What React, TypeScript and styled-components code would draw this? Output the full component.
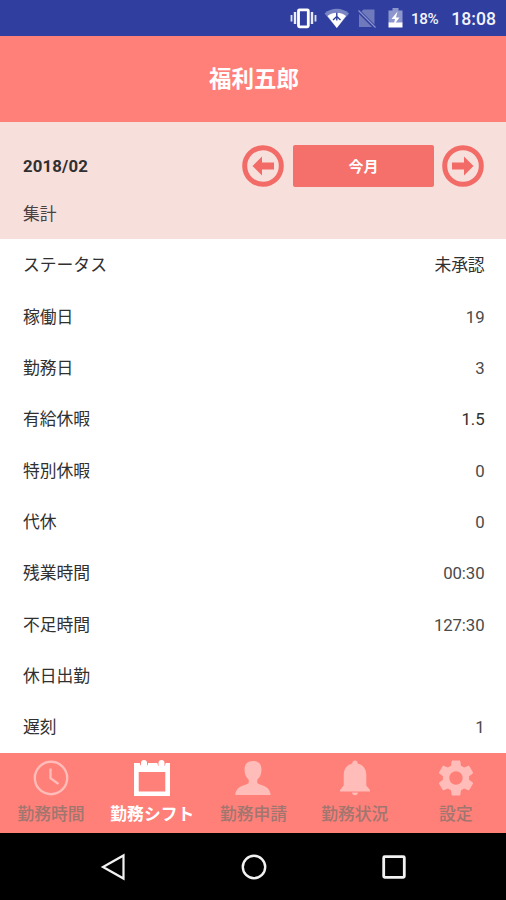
import React from "react";
import styled, { createGlobalStyle } from "styled-components";

const GlobalStyle = createGlobalStyle`
  * { box-sizing: border-box; }
  body { margin: 0; background: #fff; }
`;

const Screen = styled.div`
  width: 506px;
  height: 900px;
  display: flex;
  flex-direction: column;
  overflow: hidden;
  font-family: Roboto, "Noto Sans CJK JP", sans-serif;
  color: #303030;
  background: #fff;
`;

const StatusBar = styled.header`
  flex: 0 0 36px;
  display: flex;
  align-items: center;
  justify-content: flex-end;
  padding-right: 10px;
  background: #303f9f;
  color: #f3f4fb;
`;

const StatusIcons = styled.svg`
  width: 116px;
  height: 36px;
  display: block;
`;

const Battery = styled.span`
  width: 47px;
  padding: 2px 0 0 7px;
  font-size: 15.2px;
  font-weight: 500;
  letter-spacing: -0.4px;
`;

const Clock = styled.span`
  width: 45px;
  padding-top: 2px;
  font-size: 17.6px;
  font-weight: 500;
  text-align: right;
  white-space: nowrap;
`;

const TitleBar = styled.h1`
  flex: 0 0 86px;
  margin: 0;
  display: flex;
  align-items: center;
  justify-content: center;
  background: #ff7f79;
  color: #fff;
  font-size: 22.5px;
  font-weight: 700;
  line-height: 1;
  padding: 0 0 0 2px;
`;

const Summary = styled.section`
  flex: 0 0 117px;
  padding: 22px 22px 0 23px;
  background: #f7dfdc;
`;

const MonthRow = styled.div`
  display: flex;
  align-items: center;
  height: 44px;
`;

const Month = styled.span`
  flex: 1;
  font-size: 16.8px;
  font-weight: 700;
  letter-spacing: 0.15px;
`;

const RoundButton = styled.button`
  width: 42px;
  height: 42px;
  padding: 0;
  border: 0;
  background: none;
  svg { display: block; }
`;

const MonthButton = styled.button`
  width: 141px;
  height: 42px;
  margin: 0 8px 0 9px;
  padding: 2px 0 0;
  border: 0;
  border-radius: 2px;
  background: #f56f6b;
  color: #fff;
  font: 700 15px/1 Roboto, "Noto Sans CJK JP", sans-serif;
`;

const SummaryLabel = styled.div`
  margin-top: 14px;
  font-size: 16.8px;
  line-height: 24px;
  color: #4a4242;
`;

const List = styled.main`
  flex: 1;
  min-height: 0;
  display: grid;
  grid-auto-rows: 51.35px;
  overflow: hidden;
`;

const Row = styled.div`
  display: flex;
  align-items: center;
  justify-content: space-between;
  padding: 1px 21.5px 0 23px;
  font-size: 16.8px;
  line-height: 24px;
`;

const Value = styled.span<{ $strong?: boolean }>`
  color: ${(p) => (p.$strong ? "#303030" : "#4a4a4a")};
  letter-spacing: -0.1px;
`;

const TabBar = styled.nav`
  flex: 0 0 80px;
  display: grid;
  grid-template-columns: repeat(5, 1fr);
  background: #ff7f79;
`;

const Tab = styled.div<{ $active?: boolean }>`
  display: flex;
  flex-direction: column;
  align-items: center;
  padding: 6px 0 0 1px;
  color: ${(p) => (p.$active ? "#fff" : "#ffbcb8")};
  svg { display: block; }
`;

const TabLabel = styled.span<{ $active?: boolean }>`
  margin-top: 5px;
  font-size: 16.8px;
  line-height: 24px;
  font-weight: ${(p) => (p.$active ? 700 : 500)};
  color: ${(p) => (p.$active ? "#fff" : "#a1766f")};
  white-space: nowrap;
`;

const SystemNav = styled.footer`
  flex: 0 0 67px;
  display: flex;
  align-items: center;
  justify-content: space-between;
  padding: 0 98px 0 99px;
  background: #000;
  svg { display: block; }
`;

const rows: { label: string; value: string; strong?: boolean }[] = [
  { label: "ステータス", value: "未承認", strong: true },
  { label: "稼働日", value: "19" },
  { label: "勤務日", value: "3" },
  { label: "有給休暇", value: "1.5", strong: true },
  { label: "特別休暇", value: "0" },
  { label: "代休", value: "0" },
  { label: "残業時間", value: "00:30" },
  { label: "不足時間", value: "127:30" },
  { label: "休日出勤", value: "" },
  { label: "遅刻", value: "1" },
];

const ArrowIcon = ({ flip }: { flip?: boolean }) => (
  <svg width="42" height="42" viewBox="0 0 42 42">
    <circle cx="21" cy="21" r="18.3" fill="none" stroke="#f26b67" strokeWidth="5" />
    <path
      transform={flip ? "translate(42 0) scale(-1 1)" : undefined}
      d="M10.5 21 20 11.5V17.500H32V24.500H20V30.500Z"
      fill="#f26b67"
    />
  </svg>
);

const ClockIcon = () => (
  <svg width="38" height="38" viewBox="0 0 38 38" fill="none" stroke="currentColor" strokeWidth="2.4">
    <circle cx="19" cy="19" r="16.2" />
    <path d="M18.5 9.5V19.2L26.5 25" />
  </svg>
);

const CalendarIcon = () => (
  <svg width="38" height="38" viewBox="0 0 38 38">
    <path
      fill="currentColor"
      fillRule="evenodd"
      d="M1 4H6.800C7.200 6.500 8.500 8 11 8S14.800 6.500 15.200 4H24.300C24.700 6.500 26 8 28.500 8S32.300 6.500 32.700 4H37V37H1ZM5.700 13V32.500H32.300V13Z"
    />
    <rect x="8" y="1" width="6" height="8" rx="3" fill="currentColor" />
    <rect x="25.500" y="1" width="6" height="8" rx="3" fill="currentColor" />
  </svg>
);

const PersonIcon = () => (
  <svg width="38" height="38" viewBox="0 0 38 38" fill="currentColor">
    <path d="M19 2C13.500 2 10.500 5 10.500 10.500C10.500 15 12 18.500 14.700 20.700V24C12.500 26.500 2 26 1.300 36H36.700C36 26 25.500 26.500 23.300 24V20.700C26 18.500 27.500 15 27.500 10.500C27.500 5 24.500 2 19 2Z" />
  </svg>
);

const BellIcon = () => (
  <svg width="38" height="38" viewBox="0 0 38 38" fill="currentColor">
    <path d="M19 1.500C17.300 1.500 16.300 2.700 16.300 4.600C10.500 6 7.700 10.500 7.700 16V26.500L4 31V32.500H34V31L30.300 26.500V16C30.300 10.500 27.500 6 21.700 4.600C21.700 2.700 20.700 1.500 19 1.500Z" />
    <path d="M16 33.500H22C22 37 16 37 16 33.500Z" />
  </svg>
);

const GearIcon = () => (
  <svg width="42" height="42" viewBox="0 0 24 24" fill="currentColor">
    <path d="M19.430 12.980c.040-.320.070-.640.070-.980s-.030-.660-.070-.980l2.110-1.650c.190-.150.240-.420.120-.640l-2-3.460c-.120-.220-.390-.300-.610-.220l-2.490 1c-.520-.400-1.080-.730-1.690-.980l-.380-2.650C14.460 2.180 14.250 2 14 2h-4c-.250 0-.460.180-.490.420l-.380 2.650c-.610.250-1.170.590-1.690.980l-2.490-1c-.230-.090-.490 0-.610.220l-2 3.460c-.130.220-.070.490.120.640l2.110 1.650c-.040.320-.070.650-.070.980s.030.660.070.980l-2.110 1.650c-.190.150-.240.420-.120.640l2 3.460c.120.220.390.300.610.220l2.490-1c.520.400 1.080.730 1.690.980l.380 2.650c.030.240.240.420.490.420h4c.250 0 .460-.180.490-.420l.380-2.650c.610-.250 1.170-.590 1.690-.980l2.490 1c.230.090.490 0 .610-.220l2-3.460c.120-.220.070-.490-.120-.640l-2.110-1.650zM12 15.800c-2.100 0-3.800-1.700-3.800-3.800s1.700-3.800 3.800-3.800 3.800 1.700 3.800 3.800-1.700 3.800-3.800 3.800z" />
  </svg>
);

const GearSlot = styled.span`
  display: block;
  height: 38px;
  svg { margin-top: -2px; }
`;

const tabs = [
  { label: "勤務時間", icon: <ClockIcon /> },
  { label: "勤務シフト", icon: <CalendarIcon />, active: true },
  { label: "勤務申請", icon: <PersonIcon /> },
  { label: "勤務状況", icon: <BellIcon /> },
  { label: "設定", icon: <GearSlot><GearIcon /></GearSlot> },
];

export default function App() {
  return (
    <Screen>
      <GlobalStyle />
      <StatusBar>
        <StatusIcons viewBox="288 0 116 36">
          <rect x="298.500" y="9.800" width="9.800" height="17" rx="1" fill="none" stroke="#fff" strokeWidth="2.800" />
          <path d="M295 12V24M312 12V24" stroke="#e9ebf7" strokeWidth="2.400" />
          <path d="M291.500 15V21.500M315.500 15V21.500" stroke="#e0e3f4" strokeWidth="1.800" />
          <path d="M324.500 13.500C331.500 7.300 342 7.300 349 13.500L336.800 28Z" fill="#7984c2" />
          <path d="M327.500 16C333 11.800 340.500 11.800 346 16L336.800 28Z" fill="#fff" />
          <path d="M333 20L336.800 16.500L340.500 20M336.800 12.500V20.500" fill="none" stroke="#303f9f" strokeWidth="1.400" />
          <path d="M361.500 11.500L363.500 9.500H374.500V24.500Z" fill="#6f7abc" />
          <path d="M359 14V27H372Z" fill="#6f7abc" />
          <path d="M358.500 10.500L375.500 27.500" stroke="#8993ca" strokeWidth="1.300" />
          <path d="M392.500 8V10.500H388.500V23H402.500V10.500H398.500V8Z" fill="#8e97cd" />
          <path d="M388.500 22.500H402.500V27.500H388.500Z" fill="#fff" />
          <path d="M397.500 11.500L391.500 19H395L393.500 25.500L399.500 17.500H396Z" fill="#fff" />
        </StatusIcons>
        <Battery>18%</Battery>
        <Clock>18:08</Clock>
      </StatusBar>
      <TitleBar>福利五郎</TitleBar>
      <Summary>
        <MonthRow>
          <Month>2018/02</Month>
          <RoundButton aria-label="前月"><ArrowIcon /></RoundButton>
          <MonthButton>今月</MonthButton>
          <RoundButton aria-label="翌月"><ArrowIcon flip /></RoundButton>
        </MonthRow>
        <SummaryLabel>集計</SummaryLabel>
      </Summary>
      <List>
        {rows.map((r) => (
          <Row key={r.label}>
            <span>{r.label}</span>
            <Value $strong={r.strong}>{r.value}</Value>
          </Row>
        ))}
      </List>
      <TabBar>
        {tabs.map((t) => (
          <Tab key={t.label} $active={t.active}>
            {t.icon}
            <TabLabel $active={t.active}>{t.label}</TabLabel>
          </Tab>
        ))}
      </TabBar>
      <SystemNav>
        <svg width="28" height="28" viewBox="0 0 28 28" fill="none" stroke="#f2f2f2" strokeWidth="2.200">
          <path d="M24.500 2.500V25.500L4 14Z" />
        </svg>
        <svg width="28" height="28" viewBox="0 0 28 28" fill="none" stroke="#f2f2f2" strokeWidth="2.400">
          <circle cx="14" cy="14" r="11.200" />
        </svg>
        <svg width="28" height="28" viewBox="0 0 28 28" fill="none" stroke="#f2f2f2" strokeWidth="2.800">
          <rect x="3.700" y="3.700" width="20.600" height="20.600" rx="1" />
        </svg>
      </SystemNav>
    </Screen>
  );
}
